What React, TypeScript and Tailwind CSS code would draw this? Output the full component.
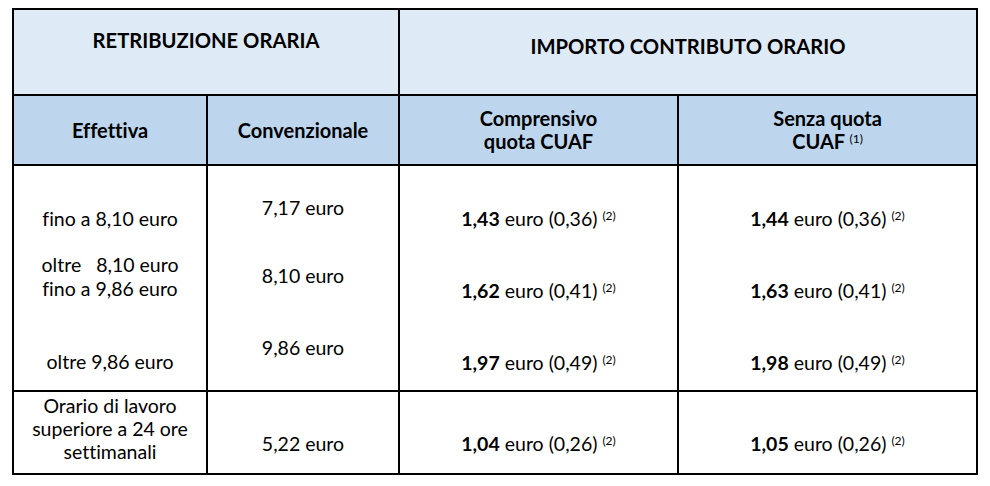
import React from "react";

const Sup = ({ children }: { children: React.ReactNode }) => (
  <sup className="text-[12px] font-normal">{children}</sup>
);

const Amount = ({ bold, rest }: { bold: string; rest: string }) => (
  <p className="leading-[23px] whitespace-nowrap">
    <span className="font-bold">{bold}</span> {rest} <Sup>(2)</Sup>
  </p>
);

export default function App() {
  return (
    <div className="w-[990px] h-[486px] bg-white pt-[8px] pl-[12px] font-['Lato',sans-serif] text-black text-[19.5px] leading-[23px] [font-variant-ligatures:none]">
      <div className="grid w-[966px] grid-cols-[192px_190px_277px_297px] grid-rows-[84px_68px_224px_81px] gap-[2px] bg-black p-[2px]">
        {/* Row 1 */}
        <div className="col-span-2 bg-[#deeaf6] pt-[19px] text-center text-[20.2px] font-bold">
          RETRIBUZIONE ORARIA
        </div>
        <div className="col-span-2 bg-[#deeaf6] pt-[25px] text-center text-[20.2px] font-bold">
          IMPORTO CONTRIBUTO ORARIO
        </div>

        {/* Row 2 */}
        <div className="flex items-center justify-center bg-[#bdd6ee] text-center text-[20px] font-bold">
          Effettiva
        </div>
        <div className="flex items-center justify-center bg-[#bdd6ee] text-center text-[20px] font-bold">
          Convenzionale
        </div>
        <div className="flex items-center justify-center bg-[#bdd6ee] text-center text-[20px] font-bold">
          <p>
            Comprensivo
            <br />
            quota CUAF
          </p>
        </div>
        <div className="flex items-center justify-center bg-[#bdd6ee] text-center text-[20px] font-bold">
          <p>
            Senza quota
            <br />
            CUAF <Sup>(1)</Sup>
          </p>
        </div>

        {/* Row 3 */}
        <div className="flex flex-col items-center bg-white pt-[41px] text-center">
          <p>fino a 8,10 euro</p>
          <p className="mt-[23px] leading-[24px] whitespace-pre">
            {"oltre   8,10 euro"}
            <br />
            {"fino a 9,86 euro"}
          </p>
          <p className="mt-[49px]">oltre 9,86 euro</p>
        </div>
        <div className="flex flex-col items-center bg-white pt-[30px] text-center">
          <p>7,17 euro</p>
          <p className="mt-[45px]">8,10 euro</p>
          <p className="mt-[49px]">9,86 euro</p>
        </div>
        <div className="flex flex-col items-center bg-white pt-[41px] text-center">
          <Amount bold="1,43" rest="euro (0,36)" />
          <div className="mt-[49px]">
            <Amount bold="1,62" rest="euro (0,41)" />
          </div>
          <div className="mt-[49px]">
            <Amount bold="1,97" rest="euro (0,49)" />
          </div>
        </div>
        <div className="flex flex-col items-center bg-white pt-[41px] text-center">
          <Amount bold="1,44" rest="euro (0,36)" />
          <div className="mt-[49px]">
            <Amount bold="1,63" rest="euro (0,41)" />
          </div>
          <div className="mt-[49px]">
            <Amount bold="1,98" rest="euro (0,49)" />
          </div>
        </div>

        {/* Row 4 */}
        <div className="bg-white pt-[2px] text-center">
          <p>
            Orario di lavoro
            <br />
            superiore a 24 ore
            <br />
            settimanali
          </p>
        </div>
        <div className="bg-white pt-[40px] text-center">
          <p>5,22 euro</p>
        </div>
        <div className="flex flex-col items-center bg-white pt-[40px] text-center">
          <Amount bold="1,04" rest="euro (0,26)" />
        </div>
        <div className="flex flex-col items-center bg-white pt-[40px] text-center">
          <Amount bold="1,05" rest="euro (0,26)" />
        </div>
      </div>
    </div>
  );
}
